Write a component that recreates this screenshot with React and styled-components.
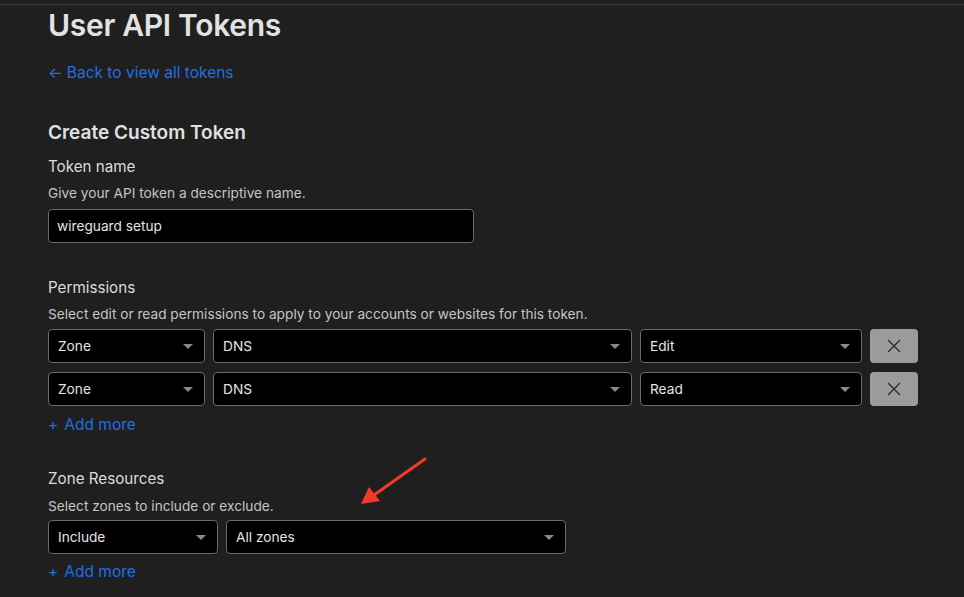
import React from 'react'
import styled, { createGlobalStyle } from 'styled-components'

const GlobalStyle = createGlobalStyle`
  html, body {
    margin: 0;
    padding: 0;
    background: #1f1f1f;
  }
  body {
    font-family: Inter, 'Noto Sans', 'Liberation Sans', sans-serif;
    color: #dedede;
  }
`

const Page = styled.div`
  position: relative;
  min-height: 597px;
  padding-top: 4px;
  box-sizing: border-box;
`

const Content = styled.div`
  border-top: 1px solid #3a3a3a;
  padding: 2px 0 0 48px;
  display: flex;
  flex-direction: column;
  align-items: flex-start;
`

const Title = styled.h1`
  margin: 0;
  font-size: 30px;
  line-height: 36px;
  font-weight: 600;
  color: #e2e2e2;
  letter-spacing: -0.3px;
`

const Link = styled.a`
  margin-top: ${(p) => p.$top || 0}px;
  font-size: 15.5px;
  line-height: 20px;
  color: #1f6fe6;
  text-decoration: none;
  cursor: pointer;
  display: flex;
  align-items: center;
  gap: ${(p) => p.$gap || 4}px;
`

const Heading = styled.h2`
  margin: 38px 0 0;
  font-size: 19px;
  line-height: 24px;
  font-weight: 600;
  color: #e0e0e0;
`

const Label = styled.div`
  margin-top: ${(p) => p.$top}px;
  font-size: 15.2px;
  line-height: 20px;
  color: #dcdcdc;
`

const Hint = styled.div`
  margin-top: ${(p) => p.$top}px;
  font-size: 13.7px;
  line-height: 18px;
  color: #c4c4c4;
`

const TextInput = styled.input`
  margin-top: 7px;
  width: 426px;
  height: 34px;
  box-sizing: border-box;
  background: #000;
  border: 1px solid #6a6a6a;
  border-radius: 4px;
  padding: 0 8px;
  font-family: inherit;
  font-size: 13.7px;
  color: #e4e4e4;
  outline: none;
`

const Row = styled.div`
  margin-top: ${(p) => p.$top}px;
  display: flex;
  gap: 8px;
`

const Rows = styled.div`
  margin-top: 6px;
  display: flex;
  flex-direction: column;
  gap: 9px;
`

const SelectBox = styled.div`
  width: ${(p) => p.$w}px;
  height: 34px;
  box-sizing: border-box;
  background: #000;
  border: 1px solid #6a6a6a;
  border-radius: 4px;
  padding: 0 10px 0 9px;
  display: flex;
  align-items: center;
  justify-content: space-between;
  font-size: 13.7px;
  color: #e4e4e4;
`

const Caret = styled.span`
  width: 0;
  height: 0;
  border-left: 5px solid transparent;
  border-right: 5px solid transparent;
  border-top: 5px solid #8a8a8a;
  margin-right: 1px;
`

const RemoveButton = styled.button`
  width: 48px;
  height: 34px;
  border: none;
  border-radius: 4px;
  background: #9b9b9b;
  display: flex;
  align-items: center;
  justify-content: center;
  padding: 0;
  cursor: pointer;
`

const Arrow = styled.svg`
  position: absolute;
  left: 356px;
  top: 454px;
`

const Select = ({ w, value }) => (
  <SelectBox $w={w}>
    <span>{value}</span>
    <Caret />
  </SelectBox>
)

const CloseIcon = () => (
  <svg width='16' height='16' viewBox='0 0 16 16'>
    <path d='M2 2 L14 14 M14 2 L2 14' stroke='#2a2a2a' strokeWidth='1.3' />
  </svg>
)

const permissions = [
  { scope: 'Zone', item: 'DNS', level: 'Edit' },
  { scope: 'Zone', item: 'DNS', level: 'Read' },
]

const App = () => (
  <Page>
    <GlobalStyle />
    <Content>
      <Title>User API Tokens</Title>
      <Link $top={20}>
        <span>←</span>
        <span>Back to view all tokens</span>
      </Link>

      <Heading>Create Custom Token</Heading>
      <Label $top={12}>Token name</Label>
      <Hint $top={7}>Give your API token a descriptive name.</Hint>
      <TextInput defaultValue='wireguard setup' />

      <Label $top={35}>Permissions</Label>
      <Hint $top={7}>
        Select edit or read permissions to apply to your accounts or websites for this token.
      </Hint>
      <Rows>
        {permissions.map((p, i) => (
          <Row key={i} $top={0}>
            <Select w={157} value={p.scope} />
            <Select w={419} value={p.item} />
            <Select w={222} value={p.level} />
            <RemoveButton>
              <CloseIcon />
            </RemoveButton>
          </Row>
        ))}
      </Rows>
      <Link $top={9} $gap={6}>
        <span>+</span>
        <span>Add more</span>
      </Link>

      <Label $top={34}>Zone Resources</Label>
      <Hint $top={8}>Select zones to include or exclude.</Hint>
      <Row $top={5}>
        <Select w={170} value='Include' />
        <Select w={340} value='All zones' />
      </Row>
      <Link $top={8} $gap={6}>
        <span>+</span>
        <span>Add more</span>
      </Link>
    </Content>

    <Arrow width='74' height='54' viewBox='0 0 74 54'>
      <line x1='69' y1='5' x2='18' y2='41' stroke='#f23a2a' strokeWidth='3' strokeLinecap='round' />
      <polygon points='5,50 13,33 24,47' fill='#f23a2a' />
    </Arrow>
  </Page>
)

export default App
